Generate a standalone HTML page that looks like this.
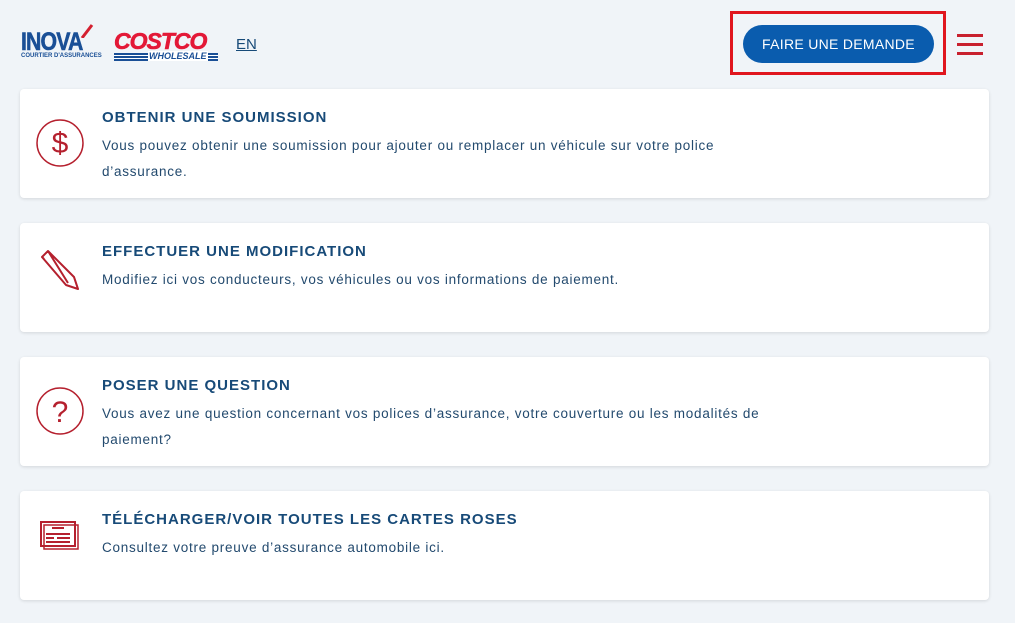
<!DOCTYPE html>
<html><head><meta charset="utf-8"><style>
body{margin:0;width:1015px;height:623px;background:#f0f4f8;font-family:"Liberation Sans",sans-serif;position:relative;overflow:hidden}
.card{position:absolute;left:20px;width:969px;height:109px;background:#fff;border-radius:4px;box-shadow:0 1px 3px rgba(0,0,0,.12)}
.card h3{position:absolute;left:82px;top:20px;margin:0;font-size:15px;font-weight:bold;color:#174a78;letter-spacing:1px}
.card p{position:absolute;left:82px;top:44px;margin:0;width:680px;font-size:13.5px;line-height:26px;color:#234a6e;letter-spacing:.75px}
.card svg{position:absolute;left:14px;top:30px}
</style></head><body>
<div style="position:absolute;left:21px;top:28px;font-weight:900;font-size:25px;color:#1a4f96;letter-spacing:-1px;transform:scaleX(.85);transform-origin:left;-webkit-text-stroke:.6px #1a4f96">INOVA</div>
<svg style="position:absolute;left:80px;top:24px" width="14" height="14"><path d="M2 14 L12 1" stroke="#d42030" stroke-width="3"/></svg>
<div style="position:absolute;left:21px;top:53px;font-size:6px;font-weight:bold;color:#1a4f96">COURTIER D'ASSURANCES</div>
<div style="position:absolute;left:114px;top:30px;font-weight:900;font-style:italic;font-size:23px;color:#e31837;letter-spacing:-1px;line-height:22px;-webkit-text-stroke:.6px #e31837">COSTCO</div>
<div style="position:absolute;left:114px;top:53px;width:104px;height:8px;background:repeating-linear-gradient(#1a4f96 0 2px,#fff 2px 3px)"></div>
<div style="position:absolute;left:148px;top:51px;font-size:9px;font-weight:900;font-style:italic;color:#1a4f96;background:#fff;padding:0 1px">WHOLESALE</div>
<div style="position:absolute;left:236px;top:36px;font-size:15px;color:#174a78;text-decoration:underline">EN</div>
<div style="position:absolute;left:730px;top:11px;width:210px;height:58px;border:3px solid #e0161e"></div>
<div style="position:absolute;left:743px;top:25px;width:191px;height:38px;border-radius:19px;background:#0a5cae;color:#fff;font-size:14px;text-align:center;line-height:38px;letter-spacing:.3px">FAIRE UNE DEMANDE</div>
<div style="position:absolute;left:957px;top:34px;width:26px;height:3px;background:#c8202e;box-shadow:0 9px 0 #c8202e,0 18px 0 #c8202e"></div>

<div class="card" style="top:89px"><svg width="50" height="50"><circle cx="26" cy="24" r="23" fill="none" stroke="#b5202e" stroke-width="1.5"/><text x="26" y="34" text-anchor="middle" font-size="30" fill="#b5202e" font-family="Liberation Sans">$</text></svg><h3>OBTENIR UNE SOUMISSION</h3><p>Vous pouvez obtenir une soumission pour ajouter ou remplacer un véhicule sur votre police d’assurance.</p></div>
<div class="card" style="top:223px"><svg width="50" height="50" style="top:22px"><path d="M8 12 L14 6 L40 32 L44 44 L32 40 Z M8 12 L10 14 M14 6 L34 38" fill="none" stroke="#b5202e" stroke-width="2" stroke-linejoin="round"/></svg><h3>EFFECTUER UNE MODIFICATION</h3><p>Modifiez ici vos conducteurs, vos véhicules ou vos informations de paiement.</p></div>
<div class="card" style="top:357px"><svg width="50" height="50"><circle cx="26" cy="24" r="23" fill="none" stroke="#b5202e" stroke-width="1.5"/><text x="26" y="35" text-anchor="middle" font-size="30" fill="#b5202e" font-family="Liberation Sans">?</text></svg><h3>POSER UNE QUESTION</h3><p>Vous avez une question concernant vos polices d’assurance, votre couverture ou les modalités de paiement?</p></div>
<div class="card" style="top:491px"><svg width="50" height="50" style="top:26px"><rect x="7" y="5" width="34" height="24" fill="none" stroke="#b5202e" stroke-width="2"/><rect x="10" y="8" width="34" height="24" fill="none" stroke="#b5202e" stroke-width="1.5"/><path d="M18 11h12M12 17h24M12 21h8M23 21h13M12 25h24" stroke="#b5202e" stroke-width="2"/></svg><h3>TÉLÉCHARGER/VOIR TOUTES LES CARTES ROSES</h3><p>Consultez votre preuve d’assurance automobile ici.</p></div>
</body></html>
